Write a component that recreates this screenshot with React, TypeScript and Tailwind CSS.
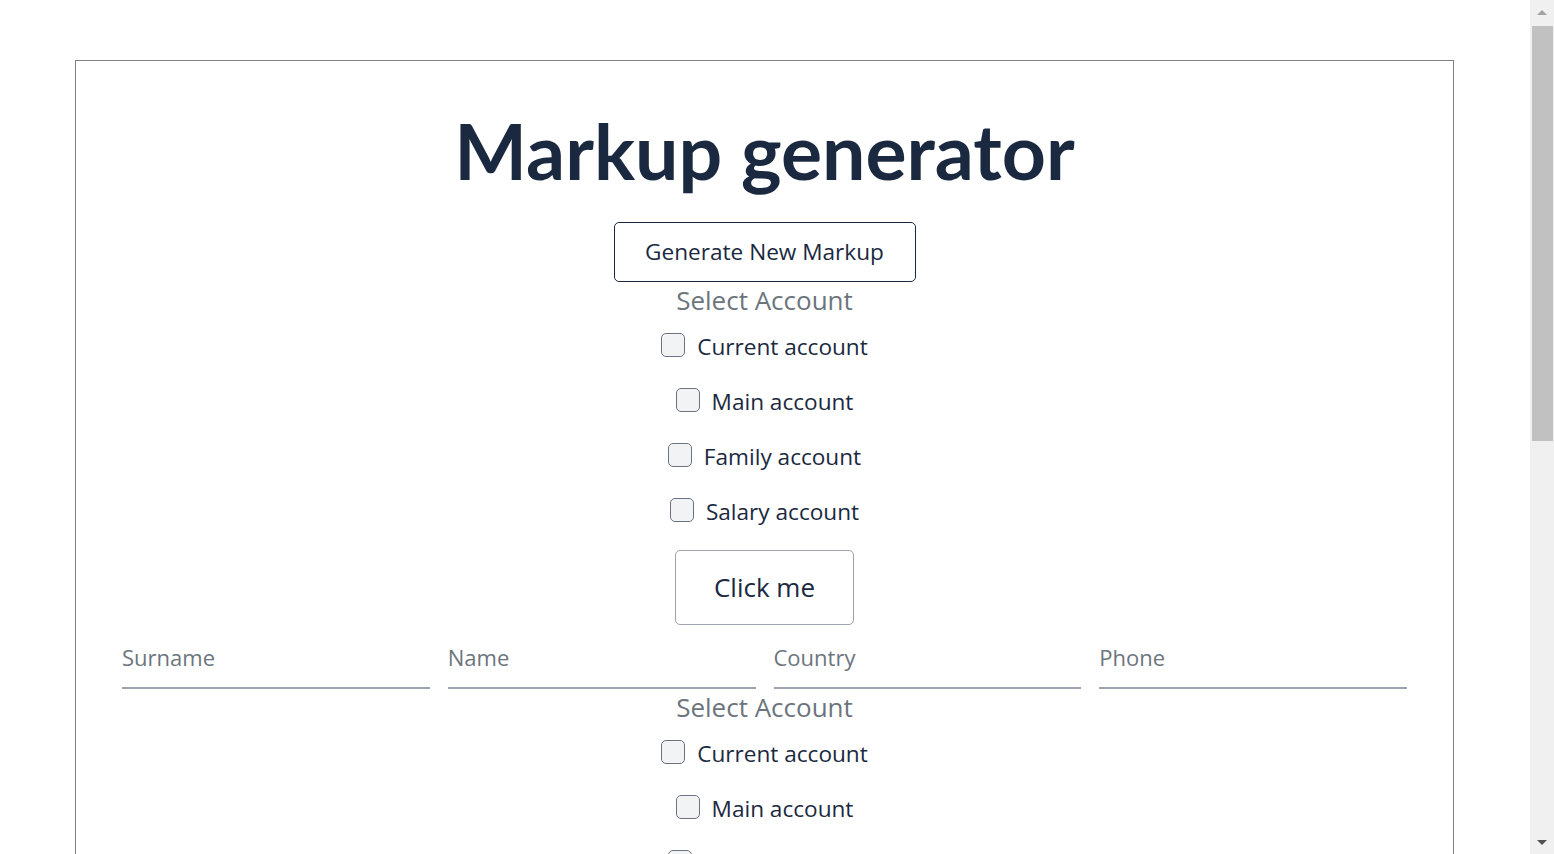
import React from 'react';

const accounts = ['Current account', 'Main account', 'Family account', 'Salary account'];
const fields = ['Surname', 'Name', 'Country', 'Phone'];

function AccountSelect() {
    return (
        <div className="flex flex-col items-center">
            <p className="text-[26px] leading-[36px] text-[#6c757d]">Select Account</p>
            <div className="flex flex-col items-center pt-[1px]">
                {accounts.map(a => (
                    <label key={a} className="flex h-[55px] items-center gap-3">
                        <input
                            type="checkbox"
                            className="mb-[3px] h-6 w-6 appearance-none rounded-[5px] border border-[#6b7280] bg-[#f1f3f5]"
                        />
                        <span className="text-[22.6px] text-[#1a2940]">{a}</span>
                    </label>
                ))}
            </div>
        </div>
    );
}

function ClickMe() {
    return (
        <div className="flex justify-center pt-[11px] pb-[2px]">
            <button className="h-[75px] w-[179px] rounded-[5px] border border-[#9ca3af] text-[26px] text-[#1a2940]">
                Click me
            </button>
        </div>
    );
}

function Fields() {
    return (
        <div className="grid grid-cols-4 gap-[18px]">
            {fields.map(f => (
                <input
                    key={f}
                    placeholder={f}
                    className="h-[62px] border-b-2 border-[#9ca3af] text-[22px] text-[#1a2940] outline-none placeholder:text-[#6c757d]"
                />
            ))}
        </div>
    );
}

// fake window scrollbar, as in the screenshot
function Scrollbar() {
    return (
        <div className="flex h-screen w-[24px] shrink-0 flex-col items-center bg-[#f0f0f0]">
            <div className="flex h-[24px] items-center justify-center">
                <div className="h-0 w-0 border-x-[5px] border-b-[5px] border-x-transparent border-b-[#a3a3a3]" />
            </div>
            <div className="mt-[2px] h-[415px] w-[21px] bg-[#c1c1c1]" />
            <div className="flex-1" />
            <div className="flex h-[24px] items-center justify-center">
                <div className="h-0 w-0 border-x-[5px] border-t-[5px] border-x-transparent border-t-[#505050]" />
            </div>
        </div>
    );
}

export default function App() {
    return (
        <div className="flex h-screen overflow-hidden bg-white" style={{ fontFamily: '"Open Sans", "Noto Sans", sans-serif' }}>
            <div className="flex-1 overflow-hidden pt-[60px]">
                <div className="ml-[75px] w-[1379px] border border-[#808080] px-[46px] pb-10">
                    <h1
                        className="pt-[39px] pb-[22px] text-center text-[77px] font-bold leading-[100px] text-[#1a2940]"
                        style={{ fontFamily: 'Lato, "Open Sans", sans-serif' }}
                    >
                        Markup generator
                    </h1>
                    <div className="flex justify-center">
                        <button className="h-[60px] w-[302px] rounded-[5px] border border-[#1a2940] text-[22.6px] text-[#1a2940]">
                            Generate New Markup
                        </button>
                    </div>
                    <AccountSelect />
                    <ClickMe />
                    <Fields />
                    <AccountSelect />
                    <ClickMe />
                    <Fields />
                </div>
            </div>
            <Scrollbar />
        </div>
    );
}
